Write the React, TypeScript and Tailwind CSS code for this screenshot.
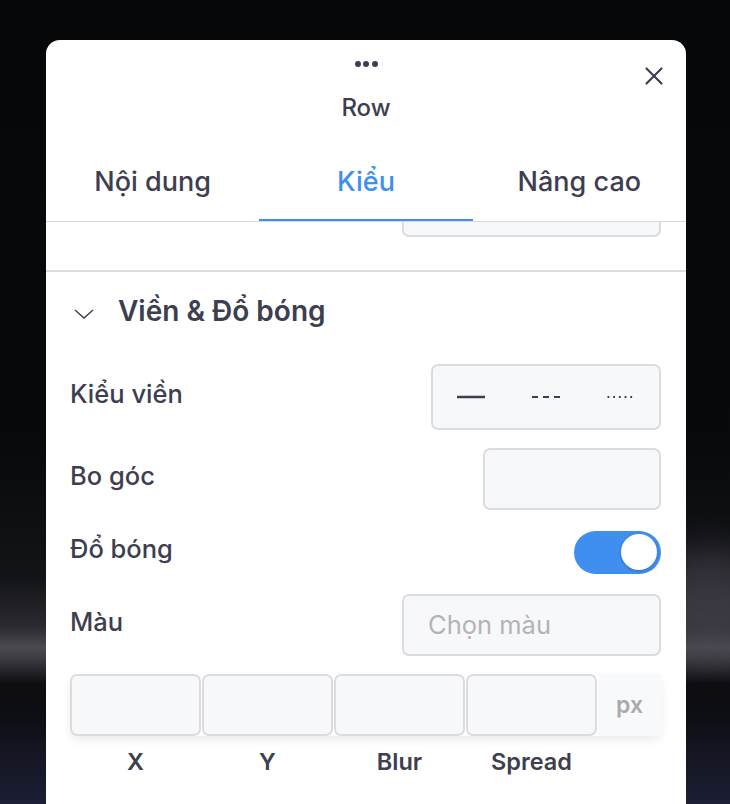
import { X } from 'lucide-react';

// Kiểu viền: liền / gạch / chấm
function BorderStyleIcon({ kind }: { kind: 'solid' | 'dashed' | 'dotted' }) {
  if (kind === 'solid') {
    return (
      <svg width="30" height="4" viewBox="0 0 30 4">
        <line x1="1" y1="2" x2="29" y2="2" stroke="#3d3e4f" strokeWidth="2.5" />
      </svg>
    );
  }
  if (kind === 'dashed') {
    return (
      <svg width="30" height="4" viewBox="0 0 30 4">
        <line x1="1" y1="2" x2="29" y2="2" stroke="#3d3e4f" strokeWidth="2" strokeDasharray="6 5" />
      </svg>
    );
  }
  return (
    <svg width="30" height="4" viewBox="0 0 30 4">
      <line x1="1.5" y1="2" x2="29" y2="2" stroke="#3d3e4f" strokeWidth="1.8" strokeDasharray="1.8 3.9" />
    </svg>
  );
}

export default function App() {
  const font = { fontFamily: 'Inter, "Noto Sans", "Liberation Sans", sans-serif' };

  return (
    <div
      className="relative w-[730px] h-[804px] overflow-hidden bg-[linear-gradient(to_bottom,#060708_0%,#08090b_55%,#131418_72%,#2a2a30_78%,#4a4a50_80.5%,#3a3a40_82%,#0e0e12_85%,#0c0d11_88%,#1c1f35_100%)]"
      style={font}
    >
      {/* nền mờ phía sau */}
      <div className="absolute right-[-40px] top-[550px] w-[120px] h-[100px] bg-[#4b4753]/60 rounded-full blur-[18px]" />

      {/* Bảng điều khiển */}
      <div className="relative ml-[46px] mt-[40px] w-[640px] h-[764px] bg-white rounded-t-[14px] text-[#3d3e4f]">
        <button className="absolute right-[17px] top-[21px] text-[#3d3e4f]">
          <X size={30} strokeWidth={1.7} />
        </button>

        {/* Header */}
        <div className="pt-[21px]">
          <div className="flex justify-center gap-[2.5px]">
            <span className="w-[6px] h-[6px] rounded-full bg-[#3d3e4f]" />
            <span className="w-[6px] h-[6px] rounded-full bg-[#3d3e4f]" />
            <span className="w-[6px] h-[6px] rounded-full bg-[#3d3e4f]" />
          </div>
          <div className="mt-[26px] text-center text-[24px] leading-[30px] font-medium">Row</div>
        </div>

        {/* Tabs */}
        <div className="mt-[43px] grid grid-cols-3 border-b border-[#d8d8dc]">
          <div className="text-center text-[27px] leading-[32px] font-medium pb-[23px]">Nội dung</div>
          <div className="text-center text-[27px] leading-[32px] font-medium pb-[21px] text-[#3f8ff0] border-b-2 border-[#3f8ff0]">
            Kiểu
          </div>
          <div className="text-center text-[27px] leading-[32px] font-medium pb-[23px]">Nâng cao</div>
        </div>

        {/* phần trước (đã cuộn) */}
        <div className="h-[48px] pr-[25px]">
          <div className="ml-auto w-[259px] h-[15px] bg-[#f7f8fa] border-x-2 border-b-2 border-[#dcdcdf] rounded-b-[7px]" />
        </div>

        {/* Viền & Đổ bóng */}
        <div className="border-t-2 border-[#dcdcdf] pl-6 pr-[25px]">
          <div className="pt-[23px] flex items-center">
            <svg width="22" height="12" viewBox="0 0 22 12" className="ml-[3px] mt-[6px]">
              <polyline points="2,2 11,10 20,2" fill="none" stroke="#3d3e4f" strokeWidth="1.4" />
            </svg>
            <span className="ml-[23px] text-[28px] leading-[32px] font-semibold">Viền &amp; Đổ bóng</span>
          </div>

          {/* Kiểu viền */}
          <div className="mt-[37px] flex items-center justify-between">
            <span className="text-[25.5px] font-medium pb-[6px]">Kiểu viền</span>
            <div className="w-[230px] h-[66px] grid grid-cols-3 items-center bg-[#f7f8fa] border-2 border-[#dcdcdf] rounded-[7px]">
              <div className="flex justify-center"><BorderStyleIcon kind="solid" /></div>
              <div className="flex justify-center"><BorderStyleIcon kind="dashed" /></div>
              <div className="flex justify-center"><BorderStyleIcon kind="dotted" /></div>
            </div>
          </div>

          {/* Bo góc */}
          <div className="mt-[18px] flex items-center justify-between">
            <span className="text-[25.5px] font-medium pb-[6px]">Bo góc</span>
            <div className="w-[178px] h-[62px] bg-[#f7f8fa] border-2 border-[#dcdcdf] rounded-[7px]" />
          </div>

          {/* Đổ bóng */}
          <div className="mt-[20px] flex items-center justify-between">
            <span className="text-[25.5px] font-medium pb-[6px]">Đổ bóng</span>
            <div className="w-[87px] h-[43px] rounded-full bg-[#3f8ff0] flex items-center justify-end pr-[4px]">
              <span className="w-[36px] h-[36px] rounded-full bg-white shadow-[0_1px_3px_rgba(0,0,0,0.25)]" />
            </div>
          </div>

          {/* Màu */}
          <div className="mt-[20px] flex items-center justify-between">
            <span className="text-[25.5px] font-medium pb-[6px]">Màu</span>
            <div className="w-[259px] h-[62px] bg-[#f7f8fa] border-2 border-[#dcdcdf] rounded-[7px] flex items-center pl-[24px] text-[25.5px] text-[#b3b3b8]">
              Chọn màu
            </div>
          </div>

          {/* X / Y / Blur / Spread */}
          <div className="mt-[18px] flex gap-px shadow-[0_4px_10px_rgba(0,0,0,0.08)] rounded-[7px]">
            {['X', 'Y', 'Blur', 'Spread'].map((k) => (
              <div key={k} className="w-[131px] h-[62px] bg-[#f7f8fa] border-2 border-[#dcdcdf] rounded-[7px]" />
            ))}
            <div className="flex-1 h-[62px] bg-[#f8f9fb] flex items-center justify-center text-[23px] font-semibold text-[#a9a9ae]">
              px
            </div>
          </div>
          <div className="mt-[12px] flex gap-px">
            {['X', 'Y', 'Blur', 'Spread'].map((k) => (
              <div key={k} className="w-[131px] text-center text-[23.5px] leading-[28px] font-semibold">
                {k}
              </div>
            ))}
          </div>
        </div>
      </div>
    </div>
  );
}
